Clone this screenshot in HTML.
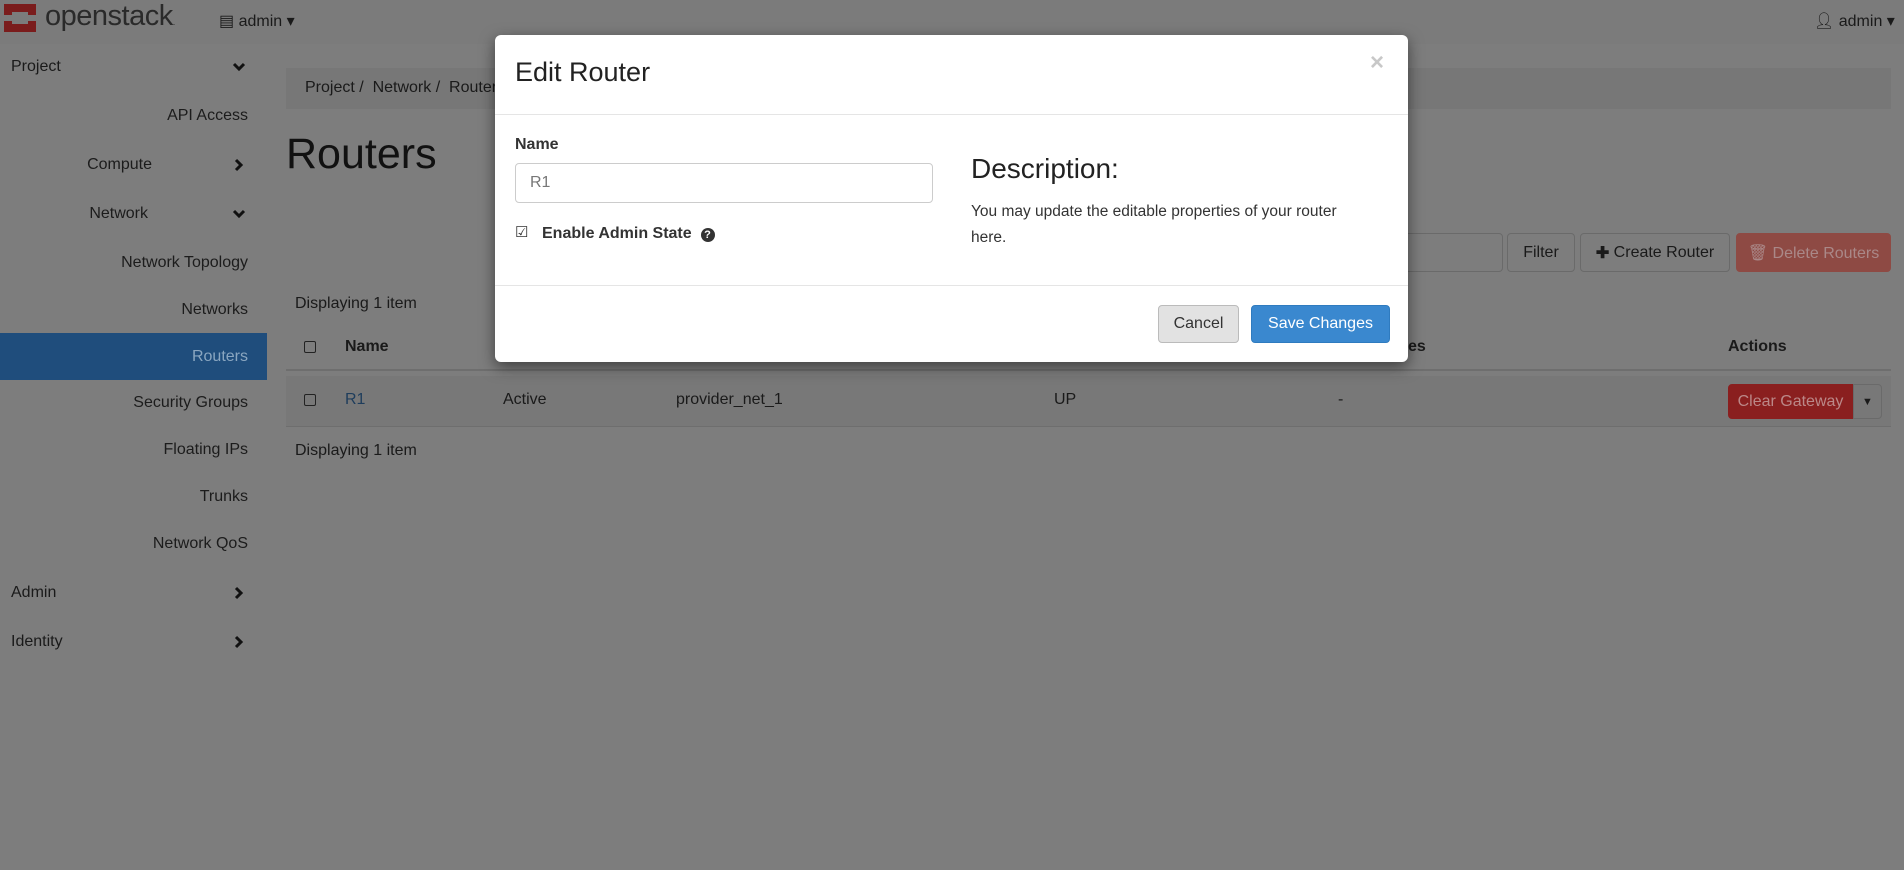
<!DOCTYPE html>
<html><head><meta charset="utf-8"><style>
*{box-sizing:border-box;margin:0;padding:0}
body{width:1904px;height:870px;overflow:hidden;background:#7d7d7d;font-family:"Liberation Sans",sans-serif;color:#1a1a1a;position:relative;font-size:16px}
.a{position:absolute;white-space:nowrap}
.top{left:0;top:0;width:1904px;height:44px;background:#7b7b7b}
.side{right:1656px;text-align:right;font-size:16px;color:#1c1c1c}
.chev{position:absolute;left:232px}
.btn{border:1px solid #6a6a6a;border-radius:4px;display:flex;align-items:center;justify-content:center;font-size:16px}
.modal{left:495px;top:35px;width:913px;height:327px;background:#fff;border-radius:6px;box-shadow:0 5px 15px rgba(0,0,0,.5)}
</style></head><body>
<div class="a top"></div>
<svg class="a" style="left:4px;top:4px" width="32" height="28" viewBox="0 0 32 28"><path d="M0 0h32v28H0zM8 8v12h16V8z" fill="#7a1c1c"/><rect x="0" y="11" width="8" height="6" fill="#7b7b7b"/><rect x="24" y="11" width="8" height="6" fill="#7b7b7b"/></svg>
<div class="a" style="left:45px;top:0px;font-size:29px;color:#2a2a2a;letter-spacing:-0.5px">openstack<span style="font-size:9px">.</span></div>
<div class="a" style="left:219px;top:11px;font-size:16px">▤ admin ▾</div>
<div class="a" style="left:1814px;top:11px;font-size:16px">👤︎ admin ▾</div>

<svg width="0" height="0" style="position:absolute"><defs><symbol id="d" viewBox="0 0 14 14"><path d="M2 4l5 5 5-5" stroke="#111" stroke-width="3" fill="none"/></symbol><symbol id="r" viewBox="0 0 14 14"><path d="M4 2l5 5-5 5" stroke="#111" stroke-width="3" fill="none"/></symbol></defs></svg>
<div class="a" style="left:11px;top:58px">Project</div><svg class="chev" style="top:60px" width="14" height="14"><use href="#d"/></svg>
<div class="a side" style="top:107px">API Access</div>
<div class="a side" style="top:156px;right:1752px">Compute</div><svg class="chev" style="top:158px" width="14" height="14"><use href="#r"/></svg>
<div class="a side" style="top:205px;right:1756px">Network</div><svg class="chev" style="top:207px" width="14" height="14"><use href="#d"/></svg>
<div class="a side" style="top:254px">Network Topology</div>
<div class="a side" style="top:301px">Networks</div>
<div class="a" style="left:0;top:333px;width:267px;height:47px;background:#1f4d7c"></div>
<div class="a side" style="top:348px;color:#8aa6c0">Routers</div>
<div class="a side" style="top:394px">Security Groups</div>
<div class="a side" style="top:441px">Floating IPs</div>
<div class="a side" style="top:488px">Trunks</div>
<div class="a side" style="top:535px">Network QoS</div>
<div class="a" style="left:11px;top:584px">Admin</div><svg class="chev" style="top:586px" width="14" height="14"><use href="#r"/></svg>
<div class="a" style="left:11px;top:633px">Identity</div><svg class="chev" style="top:635px" width="14" height="14"><use href="#r"/></svg>

<div class="a" style="left:286px;top:68px;width:1605px;height:41px;background:#777"></div>
<div class="a" style="left:305px;top:79px">Project /&nbsp; Network /&nbsp; Routers</div>
<div class="a" style="left:286px;top:130px;font-size:43px;color:#111">Routers</div>
<div class="a" style="left:1360px;top:233px;width:143px;height:39px;border:1px solid #6a6a6a;border-radius:4px"></div>
<div class="a btn" style="left:1507px;top:233px;width:68px;height:39px">Filter</div>
<div class="a btn" style="left:1580px;top:233px;width:150px;height:39px"><b>✚</b>&nbsp;Create Router</div>
<div class="a btn" style="left:1736px;top:233px;width:155px;height:39px;background:#8e4a44;border-color:#8e4a44;color:#a88">🗑︎ Delete Routers</div>
<div class="a" style="left:295px;top:295px">Displaying 1 item</div>
<div class="a" style="left:286px;top:369px;width:1605px;height:2px;background:#6e6e6e"></div>
<div class="a" style="left:286px;top:376px;width:1605px;height:51px;background:#787878;border-bottom:1px solid #6e6e6e"></div>
<div class="a" style="left:304px;top:341px;width:12px;height:12px;border:1px solid #222;border-radius:2px"></div>
<div class="a" style="left:345px;top:338px;font-weight:bold">Name</div>
<div class="a" style="left:1360px;top:338px;font-weight:bold">ty Zones</div>
<div class="a" style="left:1728px;top:338px;font-weight:bold">Actions</div>
<div class="a" style="left:304px;top:394px;width:12px;height:12px;border:1px solid #222;border-radius:2px"></div>
<div class="a" style="left:345px;top:391px;color:#1e3d5c">R1</div>
<div class="a" style="left:503px;top:391px">Active</div>
<div class="a" style="left:676px;top:391px">provider_net_1</div>
<div class="a" style="left:1054px;top:391px">UP</div>
<div class="a" style="left:1338px;top:391px">-</div>
<div class="a btn" style="left:1728px;top:384px;width:125px;height:35px;background:#8a1f1f;border-color:#8a1f1f;color:#b88;border-radius:4px 0 0 4px">Clear Gateway</div>
<div class="a btn" style="left:1853px;top:384px;width:29px;height:35px;border-radius:0 4px 4px 0;font-size:11px">▼</div>
<div class="a" style="left:295px;top:442px">Displaying 1 item</div>

<div class="a modal">
<div class="a" style="left:20px;top:22px;font-size:27px;color:#222">Edit Router</div>
<div class="a" style="left:875px;top:14px;font-size:24px;font-weight:bold;color:#c8c8c8">×</div>
<div class="a" style="left:0;top:79px;width:913px;height:1px;background:#e5e5e5"></div>
<div class="a" style="left:20px;top:101px;font-weight:bold;font-size:16px;color:#333">Name</div>
<div class="a" style="left:20px;top:128px;width:418px;height:40px;border:1px solid #ccc;border-radius:4px;padding:10px 14px;color:#777">R1</div>
<div class="a" style="left:20px;top:188px;font-size:15px;color:#333">☑</div>
<div class="a" style="left:47px;top:190px;font-weight:bold;font-size:16px;color:#333">Enable Admin State &nbsp;<span style="display:inline-block;width:14px;height:14px;border-radius:7px;background:#333;color:#fff;font-size:11px;text-align:center;line-height:14px">?</span></div>
<div class="a" style="left:476px;top:118px;font-size:28px;color:#222">Description:</div>
<div class="a" style="left:476px;top:164px;font-size:15.5px;color:#333;line-height:26px;white-space:normal;width:385px">You may update the editable properties of your router here.</div>
<div class="a" style="left:0;top:250px;width:913px;height:1px;background:#e5e5e5"></div>
<div class="a btn" style="left:663px;top:270px;width:81px;height:38px;background:#e2e2e2;border-color:#bbb;color:#333">Cancel</div>
<div class="a btn" style="left:756px;top:270px;width:139px;height:38px;background:#3a88cf;border-color:#2f7bbf;color:#fff">Save Changes</div>
</div>
</body></html>
